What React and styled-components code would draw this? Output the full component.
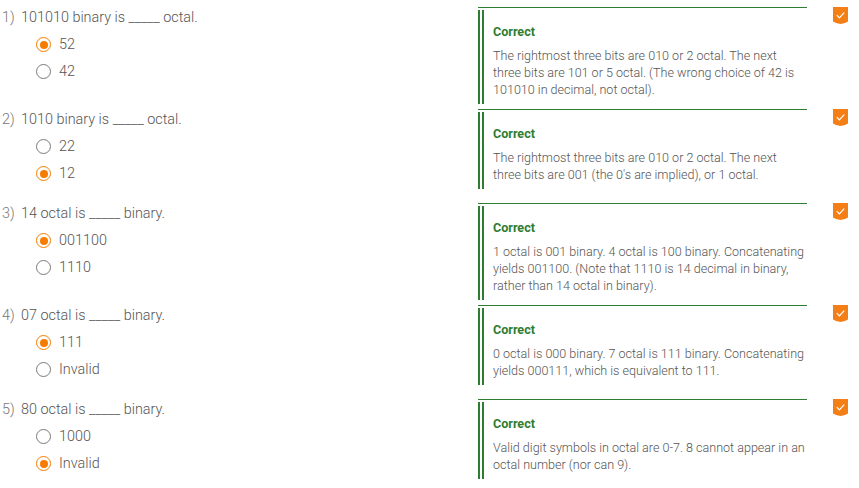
import React from 'react';
import styled, { createGlobalStyle } from 'styled-components';

const questions = [
    {
        num: '1)',
        text: '101010 binary is _____ octal.',
        options: ['52', '42'],
        chosen: 0,
        explanation: 'The rightmost three bits are 010 or 2 octal. The next three bits are 101 or 5 octal. (The wrong choice of 42 is 101010 in decimal, not octal).',
    },
    {
        num: '2)',
        text: '1010 binary is _____ octal.',
        options: ['22', '12'],
        chosen: 1,
        explanation: "The rightmost three bits are 010 or 2 octal. The next three bits are 001 (the 0's are implied), or 1 octal.",
    },
    {
        num: '3)',
        text: '14 octal is _____ binary.',
        options: ['001100', '1110'],
        chosen: 0,
        explanation: '1 octal is 001 binary. 4 octal is 100 binary. Concatenating yields 001100. (Note that 1110 is 14 decimal in binary, rather than 14 octal in binary).',
    },
    {
        num: '4)',
        text: '07 octal is _____ binary.',
        options: ['111', 'Invalid'],
        chosen: 0,
        explanation: '0 octal is 000 binary. 7 octal is 111 binary. Concatenating yields 000111, which is equivalent to 111.',
    },
    {
        num: '5)',
        text: '80 octal is _____ binary.',
        options: ['1000', 'Invalid'],
        chosen: 1,
        explanation: 'Valid digit symbols in octal are 0-7. 8 cannot appear in an octal number (nor can 9).',
    },
];

const App = () => {
    return (
        <>
            <GlobalStyle />
            <Page>
                {questions.map((q, i) => (
                    <QuestionRow key={i}>
                        <QuestionBlock>
                            <QuestionText>
                                <QuestionNum>{q.num}</QuestionNum>
                                {q.text}
                            </QuestionText>
                            <OptionList>
                                {q.options.map((opt, j) => (
                                    <Option key={j}>
                                        <Radio checked={j === q.chosen} />
                                        {opt}
                                    </Option>
                                ))}
                            </OptionList>
                        </QuestionBlock>
                        <Feedback>
                            <FeedbackInner>
                                <FeedbackTitle>Correct</FeedbackTitle>
                                <FeedbackText>{q.explanation}</FeedbackText>
                            </FeedbackInner>
                        </Feedback>
                        <Badge>
                            <svg width="15" height="17" viewBox="0 0 15 17">
                                <path d="M0 0 H15 V14.5 L12 16 L7.5 17 L3 16 L0 14.5 Z" fill="#f57f17" />
                                <path d="M3.8 8.2 L6.4 10.8 L11.2 5.6" fill="none" stroke="#fff" strokeWidth="1.2" />
                            </svg>
                        </Badge>
                    </QuestionRow>
                ))}
            </Page>
        </>
    );
}

export default App;

const GlobalStyle = createGlobalStyle`
    body {
        margin: 0;
        background: #fff;
        font-family: Roboto, "Liberation Sans", sans-serif;
    }
`;

const Page = styled.div`
    padding-top: 7px;
`;

const QuestionRow = styled.div`
    display: grid;
    grid-template-columns: 478px 329px 1fr;
    align-items: start;
    padding-bottom: 5px;
`;

const QuestionBlock = styled.div`
    padding-bottom: 11px;
    color: #555;
    font-size: 14.4px;
    font-weight: 300;
`;

const QuestionText = styled.div`
    line-height: 19px;
    padding-left: 2px;
    padding-top: 1px;
    margin-bottom: -1px;
`;

const QuestionNum = styled.span`
    display: inline-block;
    width: 19px;
    color: #777;
`;

const OptionList = styled.div`
    margin-top: 5px;
    padding-left: 36px;
`;

const Option = styled.div`
    display: flex;
    align-items: center;
    height: 27px;
    gap: 8px;
`;

const Radio = styled.span`
    box-sizing: border-box;
    width: 15px;
    height: 15px;
    border-radius: 50%;
    border: 1.5px solid ${props => props.checked ? '#f57c00' : '#7a7a7a'};
    display: flex;
    align-items: center;
    justify-content: center;

    &::after {
        content: '';
        width: 8px;
        height: 8px;
        border-radius: 50%;
        background: #f57c00;
        display: ${props => props.checked ? 'block' : 'none'};
    }
`;

const Feedback = styled.div`
    border-top: 1px solid #2e7d32;
`;

const FeedbackInner = styled.div`
    margin-top: 2px;
    border-left: 6px double #2e7d32;
    padding: 13px 0 6px 9px;
    font-size: 12.55px;
    line-height: 17px;
`;

const FeedbackTitle = styled.div`
    color: #2e7d32;
    font-weight: bold;
`;

const FeedbackText = styled.div`
    margin-top: 7px;
    color: #555;
    font-weight: 300;
`;

const Badge = styled.div`
    padding-left: 26px;
    line-height: 0;
`;
